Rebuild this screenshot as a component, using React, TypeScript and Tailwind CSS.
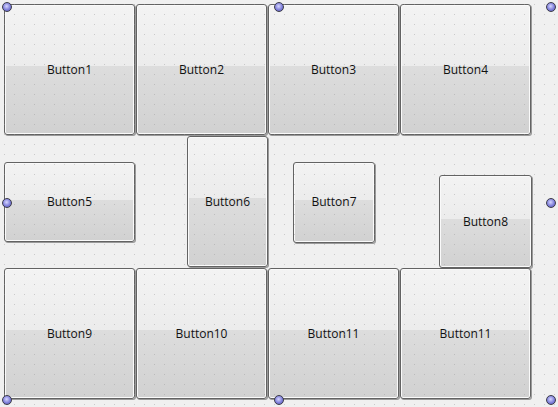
import React from "react";

function Btn({ label, className = "" }: { label: string; className?: string }) {
  return (
    <button
      className={
        "flex items-center justify-center rounded-[3px] border border-[#636363] bg-[linear-gradient(to_bottom,#f3f3f3_0%,#ececec_47%,#dddddd_47%,#d1d1d1_100%)] text-[12px] text-[#111] shadow-[inset_0_0_0_1px_#fafafa,1px_1px_0_#9a9a9a] " +
        className
      }
    >
      {label}
    </button>
  );
}

function Handle({ className }: { className: string }) {
  return (
    <div
      className={
        "absolute h-[10px] w-[10px] -translate-x-1/2 -translate-y-1/2 rounded-full border-[1.5px] border-[#3c3c4a] bg-[radial-gradient(circle_at_45%_40%,#d6d6ff_0%,#8080da_55%,#5252b0_100%)] " +
        className
      }
    />
  );
}

export default function App() {
  return (
    <div
      className="relative h-[407px] w-[558px] overflow-hidden bg-[#f0f0f0] pl-[4px] pt-[4px]"
      style={{ fontFamily: '"Open Sans", "Noto Sans", sans-serif' }}
    >
      <div className="grid grid-cols-[repeat(4,132px)] grid-rows-[repeat(3,132px)]">
        <Btn label="Button1" className="h-[131px] w-[131px]" />
        <Btn label="Button2" className="h-[131px] w-[131px]" />
        <Btn label="Button3" className="h-[131px] w-[131px]" />
        <Btn label="Button4" className="h-[131px] w-[131px]" />

        <Btn label="Button5" className="h-[80px] w-[131px] self-center" />
        <Btn label="Button6" className="h-[131px] w-[81px] justify-self-end" />
        <Btn label="Button7" className="h-[81px] w-[82px] place-self-center" />
        <Btn label="Button8" className="h-[93px] w-[93px] self-end justify-self-end" />

        <Btn label="Button9" className="h-[131px] w-[131px]" />
        <Btn label="Button10" className="h-[131px] w-[131px]" />
        <Btn label="Button11" className="h-[131px] w-[131px]" />
        <Btn label="Button11" className="h-[131px] w-[131px]" />
      </div>

      {/* designer dot grid */}
      <svg className="pointer-events-none absolute inset-0" width="558" height="407">
        <defs>
          <pattern id="dots" width="10" height="10" patternUnits="userSpaceOnUse">
            <rect x="4" y="4" width="1" height="1" fill="#9a9a9a" opacity="0.45" />
          </pattern>
        </defs>
        <rect width="558" height="407" fill="url(#dots)" />
      </svg>

      <Handle className="left-[7px] top-[7px]" />
      <Handle className="left-[279px] top-[7px]" />
      <Handle className="left-[551px] top-[7px]" />
      <Handle className="left-[7px] top-[203px]" />
      <Handle className="left-[551px] top-[203px]" />
      <Handle className="left-[7px] top-[400px]" />
      <Handle className="left-[279px] top-[400px]" />
      <Handle className="left-[551px] top-[400px]" />
    </div>
  );
}
